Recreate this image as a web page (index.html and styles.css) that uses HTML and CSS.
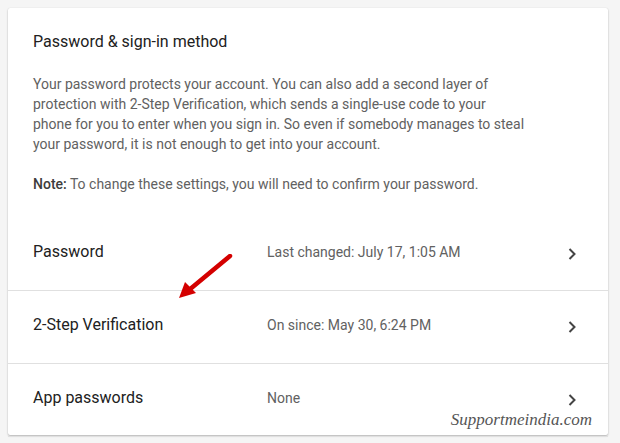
FILE: index.html
```html
<!DOCTYPE html>
<html>
<head>
<meta charset="utf-8">
<link rel="stylesheet" href="styles.css">
</head>
<body>
<div class="card">
  <div class="intro">
    <h2 class="title">Password &amp; sign-in method</h2>
    <p class="desc">Your password protects your account. You can also add a second layer of<br>protection with 2-Step Verification, which sends a single-use code to your<br>phone for you to enter when you sign in. So even if somebody manages to steal<br>your password, it is not enough to get into your account.</p>
    <p class="desc"><b>Note:</b> To change these settings, you will need to confirm your password.</p>
  </div>
  <div class="row">
    <div class="label">Password</div>
    <div class="value">Last changed: July 17, 1:05 AM</div>
    <svg class="chev" width="10" height="14" viewBox="0 0 10 14"><path d="M2.5 2 L7.5 7 L2.5 12" fill="none" stroke="#444" stroke-width="2"/></svg>
  </div>
  <div class="row">
    <div class="label">2-Step Verification</div>
    <div class="value">On since: May 30, 6:24 PM</div>
    <svg class="chev" width="10" height="14" viewBox="0 0 10 14"><path d="M2.5 2 L7.5 7 L2.5 12" fill="none" stroke="#444" stroke-width="2"/></svg>
  </div>
  <div class="row">
    <div class="label">App passwords</div>
    <div class="value">None</div>
    <svg class="chev" width="10" height="14" viewBox="0 0 10 14"><path d="M2.5 2 L7.5 7 L2.5 12" fill="none" stroke="#444" stroke-width="2"/></svg>
  </div>
  <svg class="arrow" width="60" height="50" viewBox="0 0 60 50">
    <line x1="55" y1="2" x2="14" y2="36" stroke="#d40000" stroke-width="4.5" stroke-linecap="round"/>
    <polygon points="4,44 10,28 21,39" fill="#d40000"/>
  </svg>
  <div class="watermark">Supportmeindia.com</div>
</div>
</body>
</html>
```
FILE: styles.css
```css
html, body {
  margin: 0;
  padding: 0;
}
body {
  background: #f5f5f5;
  padding: 8px 12px 8px 8px;
  font-family: Roboto, "Liberation Sans", sans-serif;
}
.card {
  position: relative;
  width: 600px;
  height: 427px;
  background: #fff;
  box-shadow: 0 1px 2px rgba(0,0,0,0.25), 0 0 1px rgba(0,0,0,0.12);
  border-radius: 2px;
  box-sizing: border-box;
}
.intro {
  padding: 22px 25px 0 25px;
}
.title {
  margin: 0;
  font-size: 16px;
  font-weight: 400;
  line-height: 24px;
  color: #212121;
}
.desc {
  margin: 20px 0 0 0;
  width: 540px;
  font-size: 14px;
  line-height: 20px;
  color: #616161;
}
.desc b {
  font-weight: 500;
  color: #3c3c3c;
}
.row {
  display: flex;
  align-items: center;
  height: 72px;
  padding: 0 31px 0 25px;
  border-bottom: 1px solid #e0e0e0;
}
.intro + .row {
  margin-top: 24px;
}
.row:last-of-type {
  border-bottom: none;
}
.label {
  width: 234px;
  font-size: 16px;
  color: #212121;
  margin-top: -5px;
}
.value {
  flex: 1;
  font-size: 14px;
  color: #616161;
  margin-top: -5px;
}
.chev {
  display: block;
}
.arrow {
  position: absolute;
  left: 167px;
  top: 246px;
}
.watermark {
  position: absolute;
  right: 16px;
  bottom: 5px;
  font-family: "Liberation Serif", serif;
  font-style: italic;
  font-size: 17px;
  color: #555;
}
```
